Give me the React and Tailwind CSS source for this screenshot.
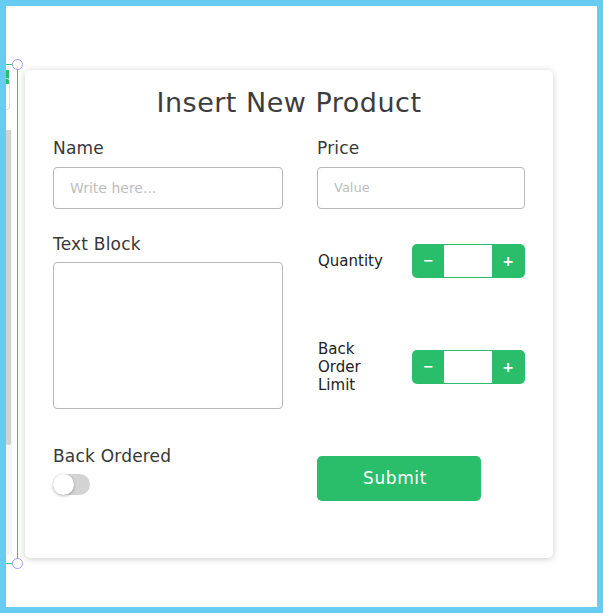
import React from "react";

function Stepper() {
  return (
    <div className="flex h-[34px] w-[113px] rounded-[5px] bg-[#2abd6a] p-[1px]">
      <button className="flex w-[31px] items-center justify-center text-[13px] font-bold text-white">−</button>
      <div className="w-[48px] bg-white"></div>
      <button className="flex flex-1 items-center justify-center text-[14px] font-bold text-white">+</button>
    </div>
  );
}

export default function App() {
  return (
    <div
      className="relative h-[613px] w-[603px] overflow-hidden border-[6px] border-[#66ccf1] bg-white text-[#383838]"
      style={{ fontFamily: '"DejaVu Sans", "Liberation Sans", sans-serif' }}
    >
      {/* left tool strip (editor chrome) */}
      <div className="absolute left-0 top-[124px] h-[425px] w-[6px] bg-[#f4f4f4]">
        <div className="h-[315px] w-[5px] rounded-b-[3px] bg-[#d2d2d2]"></div>
      </div>
      <div className="absolute left-0 top-[58px] h-[1px] w-[8px] bg-[#35c374]"></div>
      <div className="absolute left-0 top-[64px] h-[14px] w-[3px] bg-[#2abd6a]"></div>
      <div className="absolute left-[-4px] top-[72px] h-[32px] w-[8px] rounded-[3px] border border-[#dddddd]"></div>
      <div className="absolute left-[11px] top-[58px] h-[500px] w-[1px] bg-[#35c374]"></div>
      <div className="absolute left-0 top-[557px] h-[1px] w-[11px] bg-[#35c374]"></div>
      <div className="absolute left-[6px] top-[53px] h-[11px] w-[11px] rounded-full border border-[#9d9df2] bg-white"></div>
      <div className="absolute left-[6px] top-[552px] h-[11px] w-[11px] rounded-full border border-[#9d9df2] bg-white"></div>

      {/* card */}
      <div className="ml-[19px] mt-[64px] w-[528px] rounded-[5px] bg-white pb-[57px] pl-[28px] pr-[28px] pt-[17px] shadow-[0_1px_7px_rgba(0,0,0,0.2)]">
        <h1 className="text-center text-[27px] font-normal leading-[32px] tracking-[0.5px] text-[#3c3c3c]">
          Insert New Product
        </h1>

        <div className="mt-[19px] flex gap-[34px]">
          {/* left column */}
          <div className="flex w-[230px] flex-col">
            <label className="text-[17px] leading-[20px] tracking-[0.2px]">Name</label>
            <div className="mt-[9px] flex h-[42px] items-center rounded-[4px] border border-[#b8b8b8] pl-[16px] text-[14px] text-[#bdbdbd]">
              Write here...
            </div>
            <label className="mt-[25px] text-[17px] leading-[20px] tracking-[0.2px]">Text Block</label>
            <div className="mt-[8px] h-[147px] rounded-[4px] border border-[#b8b8b8]"></div>
            <label className="mt-[37px] text-[17px] leading-[20px] tracking-[0.2px]">Back Ordered</label>
            <div className="relative mt-[8px] h-[21px] w-[37px] rounded-full bg-[#d3d3d3]">
              <div className="absolute left-0 top-0 h-[21px] w-[21px] rounded-full bg-white shadow-[0_1px_3px_rgba(0,0,0,0.3)]"></div>
            </div>
          </div>

          {/* right column */}
          <div className="flex w-[208px] flex-col">
            <label className="text-[17px] leading-[20px] tracking-[0.2px]">Price</label>
            <div className="mt-[9px] flex h-[42px] items-center rounded-[4px] border border-[#b8b8b8] pl-[16px] text-[13px] text-[#bdbdbd]">
              Value
            </div>
            <div className="mt-[35px] flex items-center justify-between">
              <span className="pl-[1px] text-[15px] text-[#222]">Quantity</span>
              <Stepper />
            </div>
            <div className="mt-[62px] flex items-center justify-between">
              <span className="w-[60px] pl-[1px] text-[15px] leading-[18px] text-[#222]">
                Back
                <br />
                Order
                <br />
                Limit
              </span>
              <Stepper />
            </div>
            <button className="mt-[62px] h-[45px] w-[164px] rounded-[5px] bg-[#2abd6a] pr-[8px] text-[17px] font-normal tracking-[0.6px] text-white">
              Submit
            </button>
          </div>
        </div>
      </div>
    </div>
  );
}
